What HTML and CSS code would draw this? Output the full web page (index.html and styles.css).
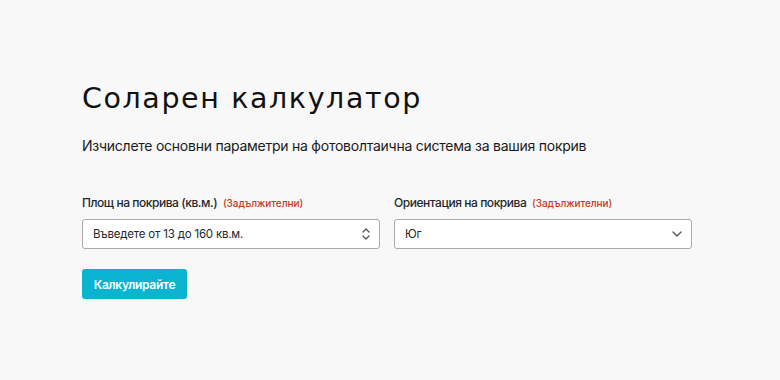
FILE: index.html
```html
<!DOCTYPE html>
<html lang="bg">
<head>
<meta charset="utf-8">
<link rel="stylesheet" href="styles.css">
</head>
<body>
<main class="page">
  <h1 class="title">Соларен калкулатор</h1>
  <p class="subtitle">Изчислете основни параметри на фотоволтаична система за вашия покрив</p>
  <div class="fields">
    <div class="field">
      <div class="label">Площ на покрива (кв.м.) <span class="req">(Задължителни)</span></div>
      <div class="control">
        <span class="placeholder">Въведете от 13 до 160 кв.м.</span>
        <svg class="icon" width="10" height="14" viewBox="0 0 10 14"><path d="M2 5 L5 2 L8 5 M2 9 L5 12 L8 9" fill="none" stroke="#555" stroke-width="1.4" stroke-linecap="round" stroke-linejoin="round"/></svg>
      </div>
    </div>
    <div class="field">
      <div class="label">Ориентация на покрива <span class="req">(Задължителни)</span></div>
      <div class="control">
        <span class="value">Юг</span>
        <svg class="icon" width="12" height="8" viewBox="0 0 12 8"><path d="M2 2 L6 6 L10 2" fill="none" stroke="#555" stroke-width="1.4" stroke-linecap="round" stroke-linejoin="round"/></svg>
      </div>
    </div>
  </div>
  <button class="btn">Калкулирайте</button>
</main>
</body>
</html>
```
FILE: styles.css
```css
html, body { margin: 0; padding: 0; }
body {
  background: #f8f8f8;
  font-family: Inter, "Noto Sans", sans-serif;
  color: #1d1d1f;
  width: 780px;
  height: 380px;
  overflow: hidden;
}
.page {
  padding: 76px 0 0 82px;
}
.title {
  margin: 0;
  font-family: "DejaVu Sans", "Open Sans", sans-serif;
  font-weight: 400;
  font-size: 28.5px;
  line-height: 46px;
  letter-spacing: 1.6px;
  color: #111;
}
.subtitle {
  margin: 14px 0 0 0;
  font-size: 14px;
  line-height: 20px;
  letter-spacing: -0.25px;
  color: #1a1a1a;
}
.fields {
  display: flex;
  gap: 14px;
  margin-top: 39px;
}
.field {
  width: 298px;
}
.label {
  font-size: 12px;
  font-weight: 500;
  line-height: 16px;
  letter-spacing: -0.45px;
  color: #23282d;
  margin-bottom: 8px;
}
.req {
  color: #c8371f;
  font-size: 10px;
  margin-left: 3px;
  letter-spacing: -0.05px;
}
.control {
  box-sizing: border-box;
  height: 30px;
  border: 1px solid #a9a9a9;
  border-radius: 3px;
  background: #fff;
  display: flex;
  align-items: center;
  justify-content: space-between;
  padding: 0 8px 0 10px;
  font-size: 11.5px;
  letter-spacing: -0.2px;
  color: #23282d;
}
.btn {
  display: block;
  margin-top: 20px;
  width: 105px;
  height: 30px;
  background: #0ab4d1;
  border: none;
  border-radius: 3px;
  color: #fff;
  font-family: Inter, sans-serif;
  font-weight: 600;
  font-size: 12px;
  letter-spacing: -0.3px;
  padding: 0;
}
```
